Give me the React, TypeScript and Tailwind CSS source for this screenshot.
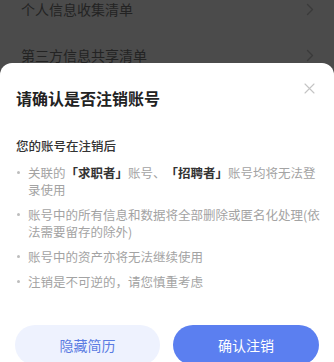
import type { ReactNode } from 'react';

const font = { fontFamily: '"Noto Sans CJK SC", "Noto Sans", sans-serif' };

function Chevron() {
  return (
    <svg width="8" height="13" viewBox="0 0 8 13" fill="none" className="shrink-0">
      <path d="M1.5 1.5 L6.5 6.5 L1.5 11.5" stroke="#3a3a3a" strokeWidth="1.3" strokeLinecap="round" strokeLinejoin="round" />
    </svg>
  );
}

function Row({ label }: { label: string }) {
  return (
    <div className="flex h-[46px] items-center justify-between pl-[21px] pr-[20px]">
      <span className="text-[14px] text-[#232323]">{label}</span>
      <Chevron />
    </div>
  );
}

function Item({ children }: { children: ReactNode }) {
  return (
    <li className="flex items-start">
      <span className="mt-[7px] mr-[8px] h-[3px] w-[3px] shrink-0 rounded-full bg-[#bdbdbd]" />
      <span className="min-w-0 flex-1 text-[12.5px] leading-[17px] text-[#a3a3a3] [text-spacing-trim:space-all]">{children}</span>
    </li>
  );
}

export default function App() {
  return (
    <div className="flex h-[362px] w-[334px] flex-col overflow-hidden bg-[#4b4b4b]" style={font}>
      <div className="h-[63px] shrink-0 overflow-hidden">
        <div className="-mt-[14px]">
          <Row label="个人信息收集清单" />
          <Row label="第三方信息共享清单" />
        </div>
      </div>

      <div className="relative flex-1 rounded-t-[12px] bg-white pt-[23px]">
        <button className="absolute right-[19px] top-[20px]">
          <svg width="11" height="11" viewBox="0 0 11 11" fill="none">
            <path d="M1 1 L10 10 M10 1 L1 10" stroke="#c4c4c4" strokeWidth="1.1" strokeLinecap="round" />
          </svg>
        </button>

        <div className="pl-4 pr-[10px]">
          <h2 className="text-[16px] font-bold leading-[24px] text-[#222]">请确认是否注销账号</h2>
          <p className="mt-[26px] text-[12.5px] font-medium leading-[20px] text-[#333]">您的账号在注销后</p>
          <ul className="mt-[8px] flex flex-col gap-[8px] pl-[1px]">
            <Item>
              关联的<b className="font-bold text-[#333]">「求职者」</b>账号、<b className="font-bold text-[#333]">「招聘者」</b>账号均将无法登录使用
            </Item>
            <Item>账号中的所有信息和数据将全部删除或匿名化处理(依法需要留存的除外)</Item>
            <Item>账号中的资产亦将无法继续使用</Item>
            <Item>注销是不可逆的，请您慎重考虑</Item>
          </ul>
        </div>

        <div className="mt-[35px] flex gap-[13px] px-[15px]">
          <button className="h-[40px] w-[145px] rounded-full bg-[#eef2fe] text-[14px] text-[#5a7be2]">隐藏简历</button>
          <button className="h-[40px] w-[146px] rounded-full bg-[#5b7ff0] text-[14px] text-white">确认注销</button>
        </div>
      </div>
    </div>
  );
}
